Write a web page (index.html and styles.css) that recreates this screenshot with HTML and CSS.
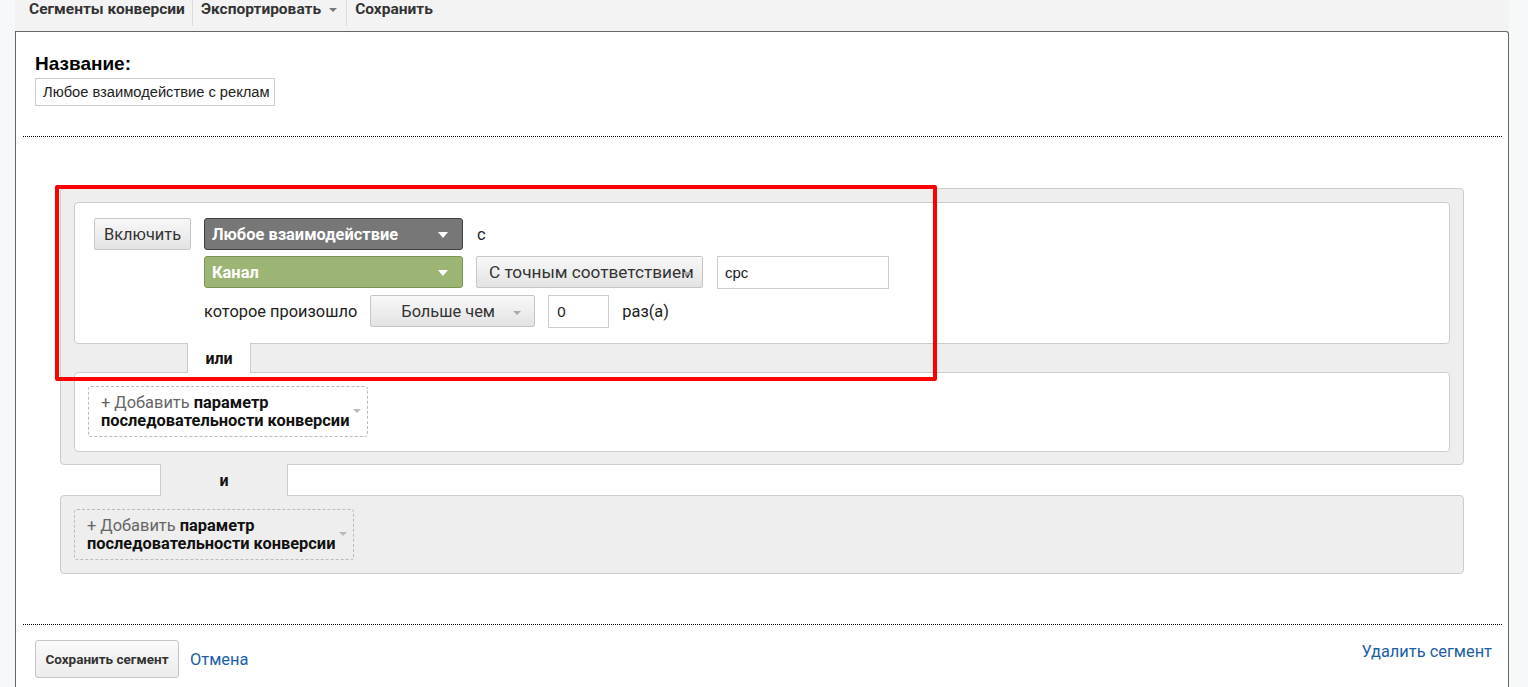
FILE: index.html
```html
<!DOCTYPE html>
<html lang="ru">
<head>
<meta charset="utf-8">
<title>Сегменты конверсии</title>
<link rel="stylesheet" href="styles.css">
</head>
<body>
<div class="page">
  <div class="toolbar">
    <span class="tb-item">Сегменты конверсии</span>
    <span class="tb-sep"></span>
    <span class="tb-item">Экспортировать <span class="tb-caret"></span></span>
    <span class="tb-sep tb-sep-2"></span>
    <span class="tb-item">Сохранить</span>
  </div>
  <div class="panel">
    <div class="name-block">
      <div class="name-label">Название:</div>
      <div class="name-input">Любое взаимодействие с реклам</div>
    </div>
    <div class="dotted"></div>

    <div class="group">
      <div class="cond">
        <div class="btn btn-include">Включить</div>
        <div class="rows">
          <div class="row">
            <div class="dd dd-dark">Любое взаимодействие<span class="caret caret-white"></span></div>
            <span class="txt">с</span>
          </div>
          <div class="row">
            <div class="dd dd-green">Канал<span class="caret caret-white"></span></div>
            <div class="btn btn-match">С точным соответствием<span class="caret caret-grey caret-match"></span></div>
            <div class="field field-cpc">cpc</div>
          </div>
          <div class="row">
            <span class="txt">которое произошло</span>
            <div class="btn btn-more">Больше чем<span class="caret caret-grey caret-more"></span></div>
            <div class="field field-num">0</div>
            <span class="txt">раз(а)</span>
          </div>
        </div>
      </div>
      <div class="tab tab-or">или</div>
      <div class="cond cond-add">
        <div class="add">
          <span class="add-plus">+ Добавить</span> <b>параметр<br>последовательности конверсии</b>
          <span class="caret caret-grey caret-add"></span>
        </div>
      </div>
    </div>
    <div class="tab tab-and">и</div>
    <div class="group group-2">
      <div class="add">
        <span class="add-plus">+ Добавить</span> <b>параметр<br>последовательности конверсии</b>
        <span class="caret caret-grey caret-add"></span>
      </div>
    </div>

    <div class="dotted dotted-footer"></div>
    <div class="footer">
      <div class="footer-left">
        <div class="btn btn-save">Сохранить сегмент</div>
        <a class="link" href="#">Отмена</a>
      </div>
      <a class="link link-del" href="#">Удалить сегмент</a>
    </div>
  </div>
</div>
<div class="annot"></div>
</body>
</html>
```
FILE: styles.css
```css
html, body {
  margin: 0;
  padding: 0;
}
body {
  background: #f7f8fa;
  font-family: Roboto, "Liberation Sans", Arial, sans-serif;
  color: #222;
  height: 687px;
  overflow: hidden;
}
.page {
  margin-left: 15px;
  width: 1494px;
}
.toolbar {
  height: 31px;
  background: #f3f3f3;
  display: flex;
  align-items: flex-start;
  padding-left: 14px;
  box-sizing: border-box;
}
.tb-item {
  font-size: 15.5px;
  font-weight: bold;
  color: #333;
  line-height: 18px;
  display: flex;
  align-items: center;
}
.tb-sep {
  width: 1px;
  height: 26px;
  background: #dcdcdc;
  margin: 0 8px 0 7px;
}
.tb-sep-2 {
  margin-left: 9px;
}
.tb-caret {
  display: inline-block;
  width: 0;
  height: 0;
  border-left: 4px solid transparent;
  border-right: 4px solid transparent;
  border-top: 4px solid #777;
  margin-left: 8px;
  margin-top: 2px;
}
.panel {
  background: #fff;
  border: 1px solid #666;
  border-bottom: none;
  border-top-right-radius: 3px;
  min-height: 700px;
  box-sizing: border-box;
}
.name-block {
  padding: 21px 0 0 19px;
}
.name-label {
  font-family: "Liberation Sans", Arial, sans-serif;
  font-weight: bold;
  font-size: 19px;
  line-height: 22px;
  color: #000;
}
.name-input {
  margin-top: 3px;
  width: 240px;
  height: 28px;
  box-sizing: border-box;
  border: 1px solid #ccc;
  font-family: "Liberation Sans", Arial, sans-serif;
  font-size: 14.7px;
  line-height: 26px;
  padding-left: 7px;
  white-space: nowrap;
  color: #222;
}
.dotted {
  margin: 30px 6px 0 7px;
  border-top: 1px dotted #000;
  height: 0;
}
.group {
  margin: 51px 44px 0 44px;
  background: #eee;
  border: 1px solid #ccc;
  border-radius: 4px;
  padding: 13px 13px 12px 13px;
}
.cond {
  background: #fff;
  border: 1px solid #ccc;
  border-radius: 4px;
  display: flex;
  padding: 15px 19px 16px 19px;
}
.cond-add {
  padding: 13px 13px 14px 13px;
}
.rows {
  display: flex;
  flex-direction: column;
  gap: 6px;
  margin-left: 13px;
}
.rows .row:last-child {
  margin-top: 1px;
}
.row {
  display: flex;
  align-items: center;
  height: 32px;
  gap: 13px;
}
.txt {
  font-size: 16.4px;
  color: #222;
}
.btn {
  box-sizing: border-box;
  height: 32px;
  border: 1px solid #c6c6c6;
  border-radius: 2px;
  background: linear-gradient(#f8f8f8, #e3e3e3);
  color: #333;
  font-size: 16.4px;
  display: flex;
  align-items: center;
  position: relative;
  white-space: nowrap;
}
.btn-include {
  width: 97px;
  justify-content: center;
}
.dd {
  box-sizing: border-box;
  width: 259px;
  height: 32px;
  border-radius: 3px;
  color: #fff;
  font-weight: bold;
  font-size: 16.4px;
  display: flex;
  align-items: center;
  padding-left: 7px;
  position: relative;
}
.dd-dark {
  background: #777;
  border: 1px solid #3f3f3f;
}
.dd-green {
  background: #9db574;
  border: 1px solid #7b9353;
}
.dd-dark + .txt {
  margin-left: 1px;
}
.caret {
  position: absolute;
  width: 0;
  height: 0;
  border-left: 5px solid transparent;
  border-right: 5px solid transparent;
}
.caret-white {
  border-top: 6px solid #fff;
  right: 14px;
  top: 13px;
}
.caret-grey {
  border-left-width: 4px;
  border-right-width: 4px;
  border-top: 4px solid #aaa;
}
.btn-match {
  width: 227px;
  padding-left: 12px;
  font-size: 17.2px;
}
.caret-match {
  left: 206px;
  top: 15px;
}
.btn-more {
  width: 165px;
  padding-left: 30px;
}
.caret-more {
  left: 142px;
  top: 15px;
}
.field {
  box-sizing: border-box;
  height: 33px;
  border: 1px solid #ccc;
  background: #fff;
  display: flex;
  align-items: center;
  padding-left: 8px;
  color: #222;
  font-family: "Liberation Sans", Arial, sans-serif;
  font-size: 15px;
}
.field-cpc {
  width: 172px;
  margin-left: 1px;
  padding-left: 7px;
}
.field-num {
  width: 61px;
}
.tab {
  font-weight: bold;
  font-size: 16px;
  display: flex;
  align-items: center;
  justify-content: center;
  box-sizing: border-box;
  position: relative;
  z-index: 1;
  color: #111;
}
.tab-or {
  width: 64px;
  height: 30px;
  margin: -1px 0 -1px 113px;
  background: #fff;
  border-left: 1px solid #ccc;
  border-right: 1px solid #ccc;
}
.tab-and {
  width: 128px;
  height: 32px;
  margin: -1px 0 -1px 144px;
  background: #eee;
  border-left: 1px solid #ccc;
  border-right: 1px solid #ccc;
}
.group-2 {
  margin-top: 0;
  padding: 13px 13px 13px 13px;
}
.add {
  position: relative;
  box-sizing: border-box;
  width: 280px;
  height: 51px;
  border: 1px dashed #bbb;
  border-radius: 3px;
  padding: 7px 12px 0 12px;
  font-size: 16.4px;
  line-height: 18px;
  color: #111;
}
.add b {
  font-weight: bold;
}
.add-plus {
  color: #666;
}
.caret-add {
  right: 6px;
  top: 22px;
  border-top-color: #bbb;
}
.dotted-footer {
  margin-top: 50px;
}
.footer {
  display: flex;
  justify-content: space-between;
  align-items: flex-start;
  padding: 15px 16px 0 19px;
}
.footer-left {
  display: flex;
  align-items: center;
  gap: 11px;
}
.btn-save {
  width: 144px;
  height: 38px;
  justify-content: center;
  font-size: 13.5px;
  font-weight: bold;
  border-radius: 3px;
  background: linear-gradient(#fafafa, #ececec);
}
.link {
  color: #1a5ea6;
  text-decoration: none;
  font-size: 16.4px;
}
.link-del {
  margin-top: 2px;
}
.annot {
  position: absolute;
  left: 55px;
  top: 185px;
  width: 882px;
  height: 196px;
  box-sizing: border-box;
  border: 4px solid #ff0000;
  border-radius: 2px;
  pointer-events: none;
}
```
